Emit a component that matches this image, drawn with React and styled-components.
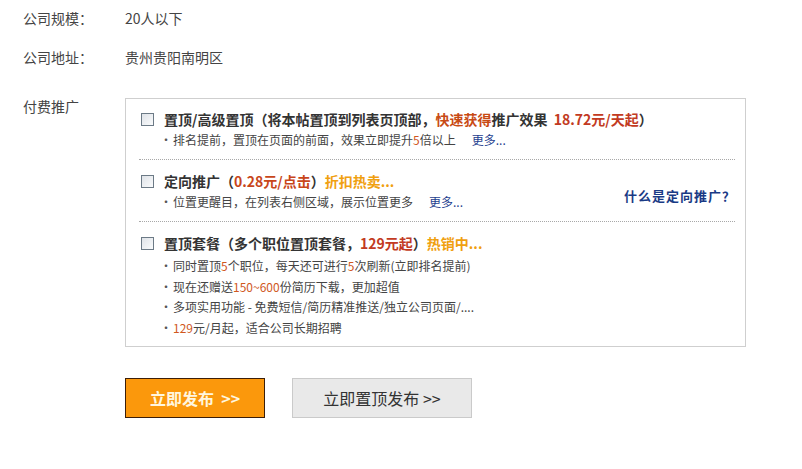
import React from 'react'
import styled, { createGlobalStyle } from 'styled-components'

const GlobalStyle = createGlobalStyle`
    html, body {
        margin: 0;
        padding: 0;
        background: #fff;
    }
    body {
        font-family: "Noto Sans CJK SC", "Liberation Sans", sans-serif;
        color: #333;
    }
`

const Page = styled.div`
    width: 802px;
    height: 469px;
    padding: 8px 0 0 23px;
    box-sizing: border-box;
`

const Row = styled.div`
    display: flex;
    align-items: flex-start;
    margin-bottom: ${p => p.gap || 0}px;
`

const Label = styled.div`
    width: 102px;
    flex-shrink: 0;
    font-size: 14px;
    line-height: ${p => p.lh || 20}px;
    color: #444;
`

const Value = styled.div`
    font-size: 14px;
    line-height: 20px;
    color: #444;
`

const PromoBox = styled.div`
    width: 621px;
    height: 249px;
    box-sizing: border-box;
    border: 1px solid #cfcfcf;
    padding: 9px 10px 0 13px;
`

const Item = styled.div`
    display: flex;
    align-items: center;
    padding: ${p => p.first ? '0 0 9px' : '10px 0 9px'};
    border-bottom: ${p => p.last ? 'none' : '1px dotted #a8a8a8'};
`

const ItemBody = styled.div`
    flex: 1;
`

const Title = styled.div`
    display: flex;
    align-items: center;
    height: 22px;
    font-size: 14px;
    font-weight: bold;
    color: #333;
    white-space: nowrap;
    margin-bottom: ${p => p.mb || 0}px;
`

const Check = styled.span`
    width: 11px;
    height: 11px;
    border: 1px solid #6c7a86;
    background: linear-gradient(135deg, #dfe3e8, #fafbfc);
    margin: 0 10px 0 2px;
    flex-shrink: 0;
`

const Hl = styled.span`
    color: ${p => p.c};
`

const Sub = styled.div`
    padding-left: 21px;
    font-size: 12px;
    line-height: ${p => p.lh || 20}px;
    color: #444;
    white-space: nowrap;
    &::before {
        content: '•';
        color: #555;
        margin-right: 1px;
    }
`

const Num = styled.span`
    color: #d0581e;
`

const More = styled.a`
    color: #1f3f8f;
    margin-left: 16px;
    text-decoration: none;
`

const Help = styled.a`
    font-size: 13px;
    letter-spacing: 1px;
    font-weight: bold;
    color: #1a3a85;
    text-decoration: none;
    margin: 8px -1px 0 0;
`

const Buttons = styled.div`
    display: flex;
    gap: 27px;
    margin: 31px 0 0 102px;
`

const Button = styled.button`
    height: 40px;
    width: ${p => p.w}px;
    box-sizing: border-box;
    font-family: "Noto Sans CJK SC", "Liberation Sans", sans-serif;
    font-size: 16px;
    cursor: pointer;
    padding: 0;
    background: ${p => p.primary ? '#fb980c' : '#e9e9e9'};
    border: 1px solid ${p => p.primary ? '#3c1e08' : '#cacaca'};
    color: ${p => p.primary ? '#fff6df' : '#333'};
    font-weight: ${p => p.primary ? 'bold' : 'normal'};
`

export default function App() {
    return (
        <Page>
            <GlobalStyle />
            <Row gap={19}>
                <Label>公司规模：</Label>
                <Value>20人以下</Value>
            </Row>
            <Row gap={31}>
                <Label>公司地址：</Label>
                <Value>贵州贵阳南明区</Value>
            </Row>
            <Row>
                <Label lh={16}>付费推广</Label>
                <PromoBox>
                    <Item first>
                        <ItemBody>
                            <Title>
                                <Check />
                                置顶/高级置顶（将本帖置顶到列表页顶部，<Hl c="#c84a14">快速获得</Hl>推广效果&nbsp;&nbsp;<Hl c="#c23a22">18.72元/天起</Hl>）
                            </Title>
                            <Sub>排名提前，置顶在页面的前面，效果立即提升<Num>5</Num>倍以上<More href="#">更多...</More></Sub>
                        </ItemBody>
                    </Item>
                    <Item>
                        <ItemBody>
                            <Title>
                                <Check />
                                定向推广（<Hl c="#c8461a">0.28元/点击</Hl>）<Hl c="#f0a010">折扣热卖...</Hl>
                            </Title>
                            <Sub>位置更醒目，在列表右侧区域，展示位置更多<More href="#">更多...</More></Sub>
                        </ItemBody>
                        <Help href="#">什么是定向推广？</Help>
                    </Item>
                    <Item last>
                        <ItemBody>
                            <Title mb={2}>
                                <Check />
                                置顶套餐（多个职位置顶套餐，<Hl c="#c23a22">129元起</Hl>）<Hl c="#f0a010">热销中...</Hl>
                            </Title>
                            <Sub lh={20.5}>同时置顶<Num>5</Num>个职位，每天还可进行<Num>5</Num>次刷新(立即排名提前)</Sub>
                            <Sub lh={20.5}>现在还赠送<Num>150~600</Num>份简历下载，更加超值</Sub>
                            <Sub lh={20.5}>多项实用功能 - 免费短信/简历精准推送/独立公司页面/....</Sub>
                            <Sub lh={20.5}><Num>129</Num>元/月起，适合公司长期招聘</Sub>
                        </ItemBody>
                    </Item>
                </PromoBox>
            </Row>
            <Buttons>
                <Button primary w={140}>立即发布&nbsp;&nbsp;&gt;&gt;</Button>
                <Button w={180}>立即置顶发布 &gt;&gt;</Button>
            </Buttons>
        </Page>
    )
}
